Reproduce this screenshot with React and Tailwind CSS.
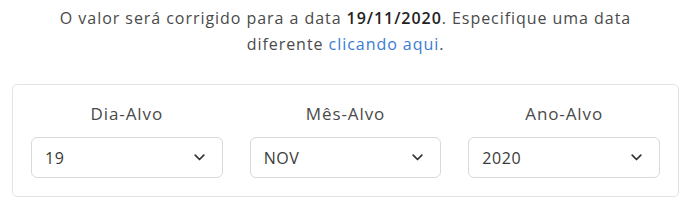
const CAMPOS = [
  { label: 'Dia-Alvo', valor: '19' },
  { label: 'Mês-Alvo', valor: 'NOV' },
  { label: 'Ano-Alvo', valor: '2020' },
]

function Chevron() {
  return (
    <svg width="11" height="7" viewBox="0 0 11 7" fill="none" className="text-[#333]">
      <path d="M1.2 1.2 L5.5 5.5 L9.8 1.2" stroke="currentColor" strokeWidth="1.7" strokeLinecap="round" strokeLinejoin="round" />
    </svg>
  )
}

export default function App() {
  return (
    <div className="w-[689px] h-[204px] bg-white pl-3 pt-[5px] font-['Open_Sans',sans-serif] text-[#4a4a4a]">
      {/* Aviso */}
      <p className="w-[667px] px-4 text-center text-[16px] leading-[26px] tracking-[0.95px]">
        O valor será corrigido para a data <b className="font-semibold text-[#222]">19/11/2020</b>. Especifique uma data
        diferente <a href="#" className="text-[#3a7bd5]">clicando aqui</a>.
      </p>

      {/* Seletores */}
      <div className="w-[667px] mt-[27px] border border-[#e3e3e3] rounded-[5px] px-[18px] pt-[16px] pb-[18px] grid grid-cols-3 gap-[27px]">
        {CAMPOS.map(c => (
          <div key={c.label} className="flex flex-col">
            <label className="text-center text-[17px] leading-[26px] mb-[10px] tracking-[0.9px]">{c.label}</label>
            <div className="h-[41px] border border-[#d9d9d9] rounded-[6px] flex items-center justify-between pl-[13px] pr-[17px] text-[16px] tracking-[0.6px] text-[#3a3a3a]">
              <span>{c.valor}</span>
              <Chevron />
            </div>
          </div>
        ))}
      </div>
    </div>
  )
}
